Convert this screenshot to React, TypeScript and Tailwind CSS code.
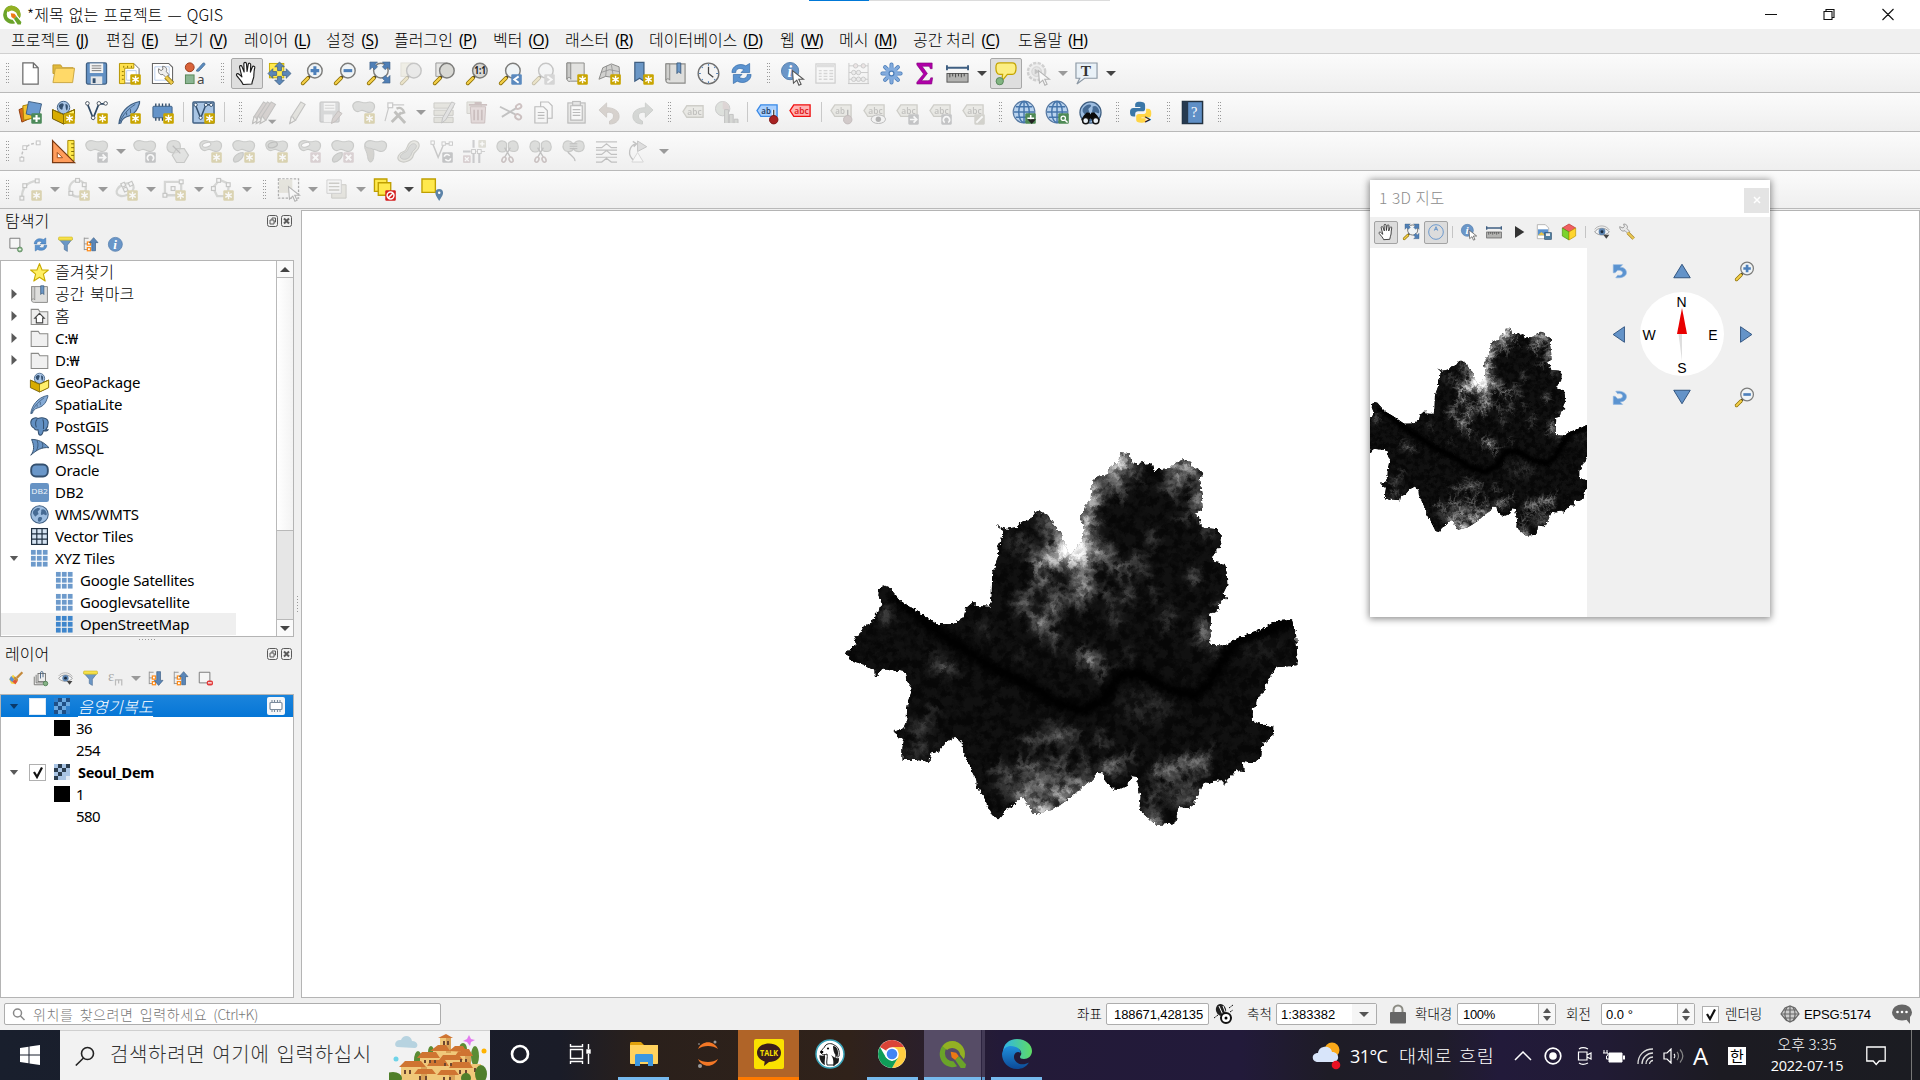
import React from 'react';

const B = '#6b97c6';
const D = '#3f5f82';
const G = '#8a8a88';

const Star = () => (
  <g>
    <rect x="12.800" y="12.800" width="11" height="11" rx="1.200" fill="#c9a500" />
    <path d="M18.300 14.300v8M14.900 16.300l6.800 4M21.700 16.300l-6.800 4" stroke="#fff" strokeWidth="1.500" />
  </g>
);
const Lens = ({ children, dark }: { children?: React.ReactNode; dark?: boolean }) => (
  <g>
    <path d="M9.500 14.500L7 17" stroke="#222" strokeWidth="2.600" />
    <path d="M7.200 16.800L1.800 22.200" stroke="#8a6d00" strokeWidth="4" strokeLinecap="round" />
    <path d="M7.200 16.800L1.800 22.200" stroke="#f4cf4a" strokeWidth="2.400" strokeLinecap="round" />
    <circle cx="14.500" cy="9" r="7.600" fill={dark ? '#d8d8d4' : '#f0f4f6'} stroke="#7d7d7b" strokeWidth="1.500" />
    {children}
  </g>
);
const Blob = () => (
  <path d="M1 6.500C0 2.500 4 0 8 .8c3 .6 5 1.500 7.500.8C20 0 24 2 23.500 6.500S19 13 15.500 11.500 11 8.800 8.500 10.300 2 11 1 6.500z" fill="#b3b8b0" stroke="#858a82" strokeWidth="1.200" />
);
const Sq = ({ c = '#7d8188', children }: { c?: string; children?: React.ReactNode }) => (
  <g>
    <rect x="12.800" y="12.800" width="11" height="11" rx="1.200" fill={c} />
    {children}
  </g>
);
const Tag = ({ t = 'abc', f = '#d9d7c3', s = '#96947c', c = '#77756a' }: { t?: string; f?: string; s?: string; c?: string }) => (
  <g>
    <path d="M1 9l4-6h17v12H5z" fill={f} stroke={s} strokeWidth="1.400" />
    <text x="5.500" y="12.400" fontSize="9.500" fill={c} fontFamily='"Noto Sans"' fontWeight="600" textLength={t.length * 5} lengthAdjust="spacingAndGlyphs">{t}</text>
  </g>
);
const World = ({ r = 11 }: { r?: number }) => (
  <g>
    <circle cx="12" cy="12" r={r} fill="#9dbde0" stroke={D} strokeWidth="1.300" />
    <path d="M4 8c3-4 6-5 8-4s-1 3-2 4 2 3 0 4-3 4-4 2-3-2-2-6zM14 6c3-2 6 0 7 4s-2 3-3 2-3 2-4 0 1-3 0-6zM12 15c3 0 4 1 3 3s-2 4-4 3-1-6 1-6z" fill="#466b94" />
  </g>
);
const GlobeGrid = () => (
  <g>
    <circle cx="11.500" cy="11.500" r="11.300" fill="#b9d3ee" stroke="#5577a0" strokeWidth="1.200" />
    <path d="M1 11.500h21M3 6h17M3 17h17M11.500 .5v22" stroke="#4575ab" strokeWidth="1.500" />
    <ellipse cx="11.500" cy="11.500" rx="5.500" ry="11" fill="none" stroke="#4575ab" strokeWidth="1.500" />
  </g>
);
const HandShape = () => (
  <path d="M8.500 23.500c-1-3-4.500-6.500-6.700-9.300-1-1.600 1-2.800 2.400-1.400l3 2.700L4.800 5.600C4.400 3.700 6.700 3 7.300 4.800l2.200 5.600L9.200 1.800c0-1.900 2.600-1.900 2.800 0l.6 8 1.200-7.400c.3-1.800 2.700-1.400 2.600.4l-.3 7.700 2-5.300c.7-1.600 2.900-.9 2.500.8-.9 3-.8 6.100-1 9-.3 3-1.900 5-2 8z" fill="#fff" stroke="#1c1c1c" strokeWidth="1.200" strokeLinejoin="round" />
);
const Refresh = () => (
  <g fill="#5b93d0" stroke="#2f67a6" strokeWidth=".7">
    <path d="M2 11C2 4 10 .5 16.500 4l4-2.500V11h-9l3-3C10 5.500 6 7 6 11z" />
    <path d="M22 13c0 7-8 10.500-14.500 7l-4 2.500V13h9l-3 3c4.500 2.500 8.500 1 8.500-3z" />
  </g>
);
const Quill = () => (
  <g>
    <path d="M1 23.500C2 14 9 3 22.500 .5c.5 3-1.500 4-1.500 6-3 7-8 9-12 10-3 1-5 3-6 6.500z" fill="#86abd6" stroke={D} strokeWidth="1.200" />
    <path d="M1.500 23C5 14 11 8 18 3.500M9 12v3M13 8.500v4" stroke={D} fill="none" />
  </g>
);
const Box = () => (
  <g>
    <path d="M.5 9L12 14l11.500-5v9.500L12 24 .5 18.500z" fill="#d8ac00" stroke="#6b5500" />
    <path d="M12 14l11.500-5v9.500L12 24z" fill="#fff06b" stroke="#8a7000" />
    <circle cx="12" cy="6.800" r="6.500" fill="#a9c5e6" stroke={D} />
    <path d="M7 5c2-3 4-3 5-2s-1 3-1 5-3 1-4-3zM14 3c3 0 3 3 2 6s-2-3-2-6z" fill="#34506f" />
    <path d="M.5 9L12 14l11.500-5" fill="none" stroke="#8a7000" />
  </g>
);
const Info = () => (
  <g>
    <circle cx="9.500" cy="9.500" r="9" fill="#6a96c8" stroke="#557fae" />
    <text x="6.800" y="15.500" fontSize="17" fontStyle="italic" fontWeight="700" fill="#fff" fontFamily='"Liberation Serif"'>i</text>
  </g>
);
const Cursor = () => <path d="M12 9l11.500 9h-5l2.500 5.200-2.300 1-2.200-5.200-3.500 3z" fill="#fff" stroke="#555" strokeWidth="1.100" />;
const Pencil = ({ x = 0, c = '#c9c8b4' }: { x?: number; c?: string }) => (
  <g transform={`translate(${x} 0)`} stroke="#77756f" strokeWidth="1.100">
    <path d="M4 23.500l1.500-7L15.500 1l4.500 2.500L10 20z" fill={c} />
    <path d="M4 23.500l1.500-7 2 .5.500 1.500 2 1.500z" fill="#efece4" />
  </g>
);
const Eye = () => (
  <g>
    <path d="M1 12C5 5 17 4 23 12 17 18 7 18 1 12z" fill="#f2f4f6" stroke="#888" strokeWidth="1.200" />
    <circle cx="12" cy="11.500" r="5" fill="#5d84b0" />
    <circle cx="12" cy="11.500" r="2.200" fill="#1d2c3d" />
    <path d="M1 8C6 1 18 1 23 9" fill="none" stroke="#aaa" strokeWidth="1.300" />
    <path d="M14 16h9l-4.500 6z" fill="#444" />
  </g>
);
const Funnel = () => (
  <g>
    <path d="M1 3h22l-8 10v10l-5-3v-7z" fill={B} stroke="#4f7197" />
    <rect x="1" y="0" width="22" height="5" rx="1" fill="#f6e14c" stroke="#c9ae00" strokeWidth=".8" />
  </g>
);
const TreeArrow = ({ up }: { up?: boolean }) => (
  <g>
    <path d="M2 1v20M2 2h7M2 11h6M2 20h6" stroke="#888" fill="none" strokeWidth="1.300" />
    <rect x="7" y="8" width="5" height="5" fill="#fff" stroke="#ff8c1a" strokeWidth="2" />
    <rect x="7" y="17" width="5" height="5" fill="#fff" stroke="#ff8c1a" strokeWidth="2" />
    <path d={up ? 'M17 1l7 8h-4v13h-6V9h-4z' : 'M17 23l7-8h-4V1h-6v14h-4z'} fill="#5a86b8" stroke="#35597f" />
  </g>
);
const Tri = ({ d }: { d: string }) => <path d={d} fill="#6493c8" stroke="#2f527d" strokeWidth="1.300" />;
const Grid9 = ({ c = '#6d9acb' }: { c?: string }) => (
  <g fill={c}>
    {[2, 9.500, 17].map((y) => [2, 9.500, 17].map((x) => <rect key={`${x}-${y}`} x={x - .8} y={y - .8} width="6" height="6" />))}
  </g>
);
const Nodes = ({ d, p }: { d: string; p: number[][] }) => (
  <g>
    <path d={d} fill="none" stroke="#a3a8a0" strokeWidth="2.400" />
    <g fill="#f4f4f4" stroke="#7c7f78" strokeWidth="1.200">{p.map(([x, y]) => <rect key={`${x},${y}`} x={x - 2} y={y - 2} width="4" height="4" />)}</g>
  </g>
);
const Split = () => (
  <g>
    <path d="M11 3.500C9 0 3 0 1.500 4S2 12 6 12.500s5-2 5-4zM13 3.500C15 0 21 0 22.500 4S23 12 19 12s-6-2-6-4z" fill="#b3b8b0" stroke="#858a82" strokeWidth="1.200" />
    <path d="M9 8l6 10M15 8L9 18" stroke="#777" strokeWidth="1.500" />
    <ellipse cx="8.300" cy="20.500" rx="1.900" ry="2.800" transform="rotate(25 8.300 20.500)" fill="none" stroke="#a07878" strokeWidth="1.700" />
    <ellipse cx="15.700" cy="20.500" rx="1.900" ry="2.800" transform="rotate(-25 15.700 20.500)" fill="none" stroke="#a07878" strokeWidth="1.700" />
  </g>
);
const XMark = () => <Sq c="#c59aa3"><path d="M15.500 15.500l5.600 5.600M21.100 15.500l-5.600 5.600" stroke="#fff" strokeWidth="2" /></Sq>;
const Part = () => <path d="M2.500 23c-3-3 2-10 9-10 1.500 5-4 10.500-9 10z" fill="#a9ada5" stroke="#858a82" strokeWidth="1.200" />;

const icons: Record<string, React.ReactNode> = {
  new: <path d="M4 1h11l5 5v17H4zM15 1v5h5" fill="#fff" stroke="#6b6b6b" strokeWidth="1.300" />,
  open: <g><path d="M1 3h8l2 3h11v6H1z" fill="#e0b93a" stroke="#c19a2a" /><path d="M3.500 6.500h20l-2 15H1z" fill="#ffd968" stroke="#c9a540" /></g>,
  save: <g><rect x="1.500" y="1" width="21" height="22" rx="1.500" fill="#6290c3" stroke={D} strokeWidth="1.300" /><rect x="5" y="1.500" width="14" height="10" fill="#f3f3f3" /><path d="M7 4h10M7 6.500h10M7 9h10" stroke="#777" /><rect x="6" y="15" width="12" height="8" fill="#e4e6e8" /><rect x="8" y="17" width="3" height="5" fill="#33506f" /></g>,
  layout: <g><path d="M2 2h15l5 5v15H2z" fill="#fff" stroke="#666" /><path d="M9 9h10v10H9z" fill="none" stroke="#bcd0ee" /><path d="M1.500 1.500h15v5H7v16H1.500z" fill="#ffe14d" stroke="#b89700" /><path d="M6 4v2M10 4v2M14 4v2M4 10h2M4 14h2M4 18h2" stroke="#8c7300" /><Star /></g>,
  manager: <g><path d="M1.500 1.500h17l4 4v17h-21z" fill="#fff" stroke="#666" strokeWidth="1.100" /><path d="M4 5h15v14H4z" fill="#fff" stroke="#bcd0ee" /><path d="M8 7l2.500 2 2-1.500L12 4.500c4 0 5 3 4 5.500l3 3.500-3 3-3.500-3.500C9 14 7 11 8 7z" fill="#eee" stroke="#777" /><path d="M15.500 15.500l7 7" stroke="#8a6d00" strokeWidth="4.600" /><path d="M15.500 15.500l6.800 6.800" stroke="#ecc94b" strokeWidth="3" /></g>,
  style: <g><circle cx="6" cy="5.500" r="4.600" fill="#d9633a" stroke="#9b3d1d" /><path d="M13 9.500c0-2 1.500-2 2.500-3.500L20 1c2 0 2.500 1 1.500 2.200L17 8c-1 1.500-2 2-4 1.500z" fill="#5c8cc0" stroke="#3e668f" strokeWidth=".8" /><rect x="1.500" y="13.500" width="9" height="9" fill="#8bb593" stroke="#588758" /><text x="13.500" y="22.500" fontSize="14" fill="#444" fontFamily='"Noto Sans"'>a</text></g>,
  hand: <HandShape />,
  pan: <g><rect x="1.500" y="1.500" width="15" height="15" fill="#ffe94d" stroke="#c9ad00" /><path d="M12 0l5 5h-3v4h-4V5H7zM12 24l5-5h-3v-4h-4v4H7zM0 12l5-5v3h4v4H5v3zM24 12l-5-5v3h-4v4h4v3z" fill="#5b87b9" stroke={D} strokeWidth=".8" /></g>,
  zin: <Lens><path d="M14.500 4.500v9M10 9h9" stroke="#4d80bb" strokeWidth="3.200" /></Lens>,
  zout: <Lens><path d="M10 9h9" stroke="#4d80bb" strokeWidth="3.200" /></Lens>,
  zfull: <g><Lens /><path d="M3 0h8L8.500 2.500 11 5 8 8 5.500 5.500 3 8zM24 0h-8l2.500 2.500L16 5l3 3 2.500-2.500L24 8zM24 22h-8l2.500-2.500L16 17l3-3 2.500 2.500L24 14z" fill="#4f7fb6" stroke={D} strokeWidth=".6" /></g>,
  zsel: <g><rect x="1" y="1" width="12" height="14" fill="#e8e2b8" stroke="#c9c19a" /><Lens dark /></g>,
  zlay: <g><path d="M3 1h12v14H3z" fill="#e6e6e4" stroke="#999" /><Lens dark /></g>,
  z11: <Lens dark><text x="8.500" y="13" fontSize="10.500" fontWeight="700" fill="#222" fontFamily='"Open Sans"' textLength="12.500" lengthAdjust="spacingAndGlyphs">1:1</text></Lens>,
  zlast: <g><Lens /><Sq c="#5b8abf"><path d="M20.500 15l-4.500 3.300 4.500 3.300" fill="none" stroke="#fff" strokeWidth="2" /></Sq></g>,
  znext: <g><Lens /><Sq c="#aaa"><path d="M16 15l4.500 3.300L16 21.600" fill="none" stroke="#fff" strokeWidth="2" /></Sq></g>,
  newmap: <g><path d="M2 1h18v19H6c-3 1-4-1-4-3z" fill="#e2e2e0" stroke={G} /><path d="M2 18c0-2 4-3 4 0V1H2z" fill="#c9c9c7" stroke={G} /><Star /></g>,
  mesh: <g><path d="M1 18L5 6l9-4 8 3 1 14-8-3-7-1z" fill="#d0d0ce" stroke={G} /><path d="M3 11l9-3 10 2M9 4L8 15M14 3l2 12" stroke="#8f8f8f" fill="none" strokeWidth=".8" /><Star /></g>,
  bmnew: <g><path d="M4 .5h9.500V20L9 17l-5 3z" fill={B} stroke={D} strokeWidth="1.300" /><Star /></g>,
  bm: <g><path d="M2 2h20v20H6c-3 0-4-1-4-3z" fill="#dededc" stroke={G} strokeWidth="1.200" /><path d="M2 19c0-2 4-2 4 0V2H2z" fill="#cfcfcd" stroke={G} /><path d="M13.500 1h4v11l-2-2-2 2z" fill={B} stroke={D} /></g>,
  clock: <g><circle cx="12" cy="12" r="10.800" fill="#f4f4f4" stroke="#6f6f6f" strokeWidth="1.400" /><path d="M12 5v7l5 4" fill="none" stroke="#444" strokeWidth="1.300" /><path d="M12 2v2M12 20v2M2 12h2M20 12h2M5 5l1 1M19 5l-1 1M5 19l1-1M19 19l-1-1" stroke="#4f7fb6" strokeWidth="1.200" /></g>,
  refresh: <Refresh />,
  ident: <g><Info /><Cursor /></g>,
  table: <g><rect x="2" y="2" width="20" height="20" fill="#fafafa" stroke="#999" strokeWidth="1.300" /><path d="M3 4h18" stroke="#bbb" strokeWidth="3" /><path d="M5 9h3M10 9h4M16 9h4M5 12h3M10 12h4M16 12h4M5 15h3M10 15h4M16 15h4M5 18h3M10 18h4M16 18h4" stroke="#aaa" strokeWidth="1.500" /></g>,
  abacus: <g fill="#ddd" stroke="#888"><path d="M2 1v21M22 1v21M2 4h20M2 11h20M2 18h20M1 22.500h22" fill="none" /><circle cx="9" cy="4" r="2.300" fill="#e8c4c4" /><circle cx="17" cy="4" r="2.300" fill="#e8c4c4" /><circle cx="7" cy="11" r="2.300" /><circle cx="12" cy="11" r="2.300" /><circle cx="17" cy="18" r="2.300" /><circle cx="12" cy="18" r="2.300" /><circle cx="7" cy="18" r="2.300" /></g>,
  gear: <g><g stroke="#4c7db8" strokeWidth="4.200" strokeLinecap="round"><path d="M12 2.500v19M2.500 12h19M5.300 5.300l13.400 13.400M18.700 5.300L5.300 18.700" /></g><g stroke="#82abdd" strokeWidth="2.600" strokeLinecap="round"><path d="M12 2.500v19M2.500 12h19M5.300 5.300l13.400 13.400M18.700 5.300L5.300 18.700" /></g><circle cx="12" cy="12" r="6.600" fill="#82abdd" /><circle cx="12" cy="12" r="2.500" fill="#fafafa" stroke="#4c7db8" strokeWidth="1.300" /></g>,
  sigma: <path d="M4 1h16v6h-2c-.5-2-1-2.500-3-2.500H9.500L15 12l-6 7.500h6.500c2 0 2.500-1 3-3h2L19.500 23H4v-2l7-8.500L4 3z" fill="#b000a8" stroke="#7b0076" strokeWidth=".6" />,
  measure: <g><path d="M1 6h22M1 3.500v5M23 3.500v5" stroke={D} strokeWidth="2" /><rect x="1" y="12" width="22" height="9" fill="#b3b3b1" stroke="#555" /><path d="M4 12v4M7 12v3M10 12v4M13 12v3M16 12v4M19 12v3" stroke="#444" /></g>,
  tips: <g><path d="M6 1h13c3 0 4 2 4 5s-1 7-4 7h-5l-6 7 1-7H6c-3 0-4-3-4-7s1-5 4-5z" fill="#fcee82" stroke="#c4a400" strokeWidth="1.300" /><circle cx="6" cy="20" r="3.800" fill="#82b582" stroke="#57875a" /></g>,
  run: <g><circle cx="10" cy="10" r="9" fill="#e2e2e2" stroke="#999" strokeWidth="2.500" strokeDasharray="3.500 1.300" /><circle cx="10" cy="10" r="5" fill="#ccc" stroke="#999" /><path d="M8 7l5 3-5 3z" fill="#777" /><Cursor /></g>,
  textann: <g><path d="M1 1h22v16H10l-8 6 3-6H1z" fill="#e9f1f7" stroke="#8c98a4" strokeWidth="1.200" /><text x="6" y="14.500" fontSize="16" fontWeight="700" fill="#333" fontFamily='"Liberation Serif"'>T</text></g>,

  layers: <g><path d="M0 9l7-3 5 12-9 4z" fill="#d96b1c" stroke="#8f3c0a" /><path d="M4 5l9-2 1 15-9 2z" fill="#f4c430" stroke="#a97f00" /><path d="M10 .5l13.500 2.500-3 13.500-13-3z" fill="#6b9ad0" stroke={D} /><Sq c="#4c8a5a"><path d="M18.300 14.600v7.400M14.600 18.300h7.400" stroke="#fff" strokeWidth="2.200" /></Sq></g>,
  gpkg: <g><Box /><Star /></g>,
  vnew: <g><path d="M2.500 3l6 15 6-15h7" fill="none" stroke="#2f4a66" strokeWidth="1.800" /><g fill="#fff" stroke="#49545f"><circle cx="2.500" cy="2.500" r="1.900" /><circle cx="14.500" cy="2.500" r="1.900" /><circle cx="21.500" cy="2.500" r="1.900" /><circle cx="8.500" cy="17.500" r="1.900" /></g><Star /></g>,
  quillnew: <g><Quill /><Star /></g>,
  chip: <g><path d="M5 2.500v18M8.500 2.500v18M12 2.500v18M15.500 2.500v18M19 2.500v18" stroke="#2c4866" strokeWidth="1.400" /><rect x="2" y="5.500" width="20" height="12" rx="1" fill="#6493c8" stroke={D} /><Star /></g>,
  virt: <g><rect x="1" y="1" width="22" height="22" rx="1" fill="#a9c5e4" stroke={D} strokeWidth="1.500" /><path d="M3.500 4l5.500 14L14.500 4h6" fill="none" stroke="#34506f" strokeWidth="1.600" /><g fill="#fff" stroke="#34506f"><circle cx="3.800" cy="4" r="1.700" /><circle cx="14.500" cy="4" r="1.700" /><circle cx="20" cy="4" r="1.700" /><circle cx="9" cy="17.500" r="1.700" /></g><Star /></g>,
  pencils: <g><Pencil x={-4.500} c="#b09a92" /><Pencil x={-.5} c="#b09a92" /><Pencil x={3.500} c="#b09a92" /><path d="M15.500 19.500h9l-4.500 4.500z" fill="#222" /></g>,
  pencil: <Pencil />,
  savee: <g><rect x="1" y="1" width="20" height="21" rx="1" fill="#a9adb1" stroke="#777" /><rect x="5" y="2" width="12" height="8" fill="#f3f3f3" /><path d="M6 4.500h10M6 7.500h10" stroke="#999" /><rect x="5" y="14" width="9" height="8" fill="#eee" /><path d="M13 23.500l1-5 6-8 4 2.500-6.500 8z" fill="#b8a199" stroke="#857068" /></g>,
  addblob: <g><Blob /><Star /></g>,
  vertex: <g><path d="M6 4h14M4 6L0 21" stroke="#888" fill="none" strokeWidth="1.200" /><rect x="3" y="2" width="5" height="5" fill="#fff" stroke="#888" strokeWidth="1.300" /><path d="M7 22L17 12M10 11l11 12" stroke="#77756a" strokeWidth="3" /><path d="M12 8c4-2 7 0 8 4l-3 1" stroke="#77756a" strokeWidth="2.500" fill="none" /></g>,
  multi: <g><path d="M1 2h20v5.500H1zM1 9.500h20V15H1zM1 17h20v5.500H1z" fill="#cdcbb0" stroke="#8f8c78" /><path d="M9 23l1-5.500L19.500 1l3.500 1.500-9.500 17z" fill="#c7c7c7" stroke="#777" /></g>,
  trash: <g><path d="M1 1h15v12H1z" fill="#d6d2bd" stroke="#a19d85" /><path d="M3 4h19M9 2h7" stroke="#a56a6a" strokeWidth="2" fill="none" /><path d="M4.500 6h16l-1 17H5.500z" fill="#ddb0b0" stroke="#a56a6a" /><path d="M8.500 9v11M12.500 9v11M16.500 9v11" stroke="#a56a6a" strokeWidth="1.800" /></g>,
  cut: <g fill="none" stroke="#777" strokeWidth="2"><path d="M1 6l16 8M3 16.500l15-9" /><ellipse cx="20" cy="16.500" rx="3.300" ry="2.500" transform="rotate(30 20 16.500)" stroke="#a96f6f" /><ellipse cx="20.500" cy="5.800" rx="3" ry="2.200" transform="rotate(-30 20.500 5.800)" stroke="#a96f6f" /></g>,
  copy: <g fill="#fafafa" stroke="#666" strokeWidth="1.200"><path d="M9 1h8l4 4v13H9z" /><path d="M3 6h9l4 4v13H3z" /><path d="M6 12h7M6 15h7M6 18h7" /></g>,
  paste: <g stroke="#666" strokeWidth="1.200"><rect x="3" y="2" width="18" height="21" fill="#d5d5d0" /><path d="M6 5h12v15H6z" fill="#fff" /><rect x="8" y="0.500" width="8" height="4" fill="#ccc" /><path d="M8 9h8M8 12h8M8 15h8" /></g>,
  undo: <path d="M9 1L1 8.500 9 16v-5c5-1 8 1 7 5-.5 2-2 3-4 4v3c6 0 10-3 10-8 0-6-6-9-13-9z" transform="translate(0 1)" fill="#b59d89" stroke="#a08b7a" />,
  redo: <path d="M15 1l8 7.500L15 16v-5c-5-1-8 1-7 5 .5 2 2 3 4 4v3c-6 0-10-3-10-8 0-6 6-9 13-9z" transform="translate(0 1)" fill="#a3aca3" stroke="#8c958c" />,
  label: <g transform="translate(0 2)"><Tag /></g>,
  diag: <g><circle cx="8" cy="8" r="7.500" fill="#b7c4b0" stroke="#888" /><path d="M8 8V.5a7.500 7.500 0 0 1 6 11z" fill="#c79f9f" /><path d="M10 23V9h4v14M15 23v-9h4v9M20 23v-4h4v4" fill="#a9b0a4" stroke="#777" /></g>,
  labelpin: <g transform="translate(0 1)"><Tag t="ab" f="#a9d0ff" s="#3b8ae6" c="#243f66" /><path d="M18.500 8v7" stroke="#fff" strokeWidth="3" /><path d="M18.500 8v8" stroke="#444" strokeWidth="1.400" /><circle cx="18.500" cy="18.500" r="4.400" fill="#a82222" stroke="#7c1212" /></g>,
  labelred: <g transform="translate(0 1)"><Tag f="#ffb3b3" s="#f01010" c="#e02020" /></g>,
  lpin: <g transform="translate(0 1)"><Tag t="ab" /><path d="M18.500 8v8" stroke="#555" strokeWidth="1.400" /><circle cx="18.500" cy="18.500" r="4.400" fill="#b08a8a" stroke="#8a6666" /></g>,
  leye: <g transform="translate(0 1)"><Tag /><ellipse cx="16" cy="18" rx="7.500" ry="4.500" fill="#f2f2f2" stroke="#666" /><circle cx="16" cy="18" r="2.800" fill="#555" /></g>,
  lmove: <g transform="translate(0 1)"><Tag /><Sq><path d="M14.500 18.300h6.500M18.300 15l3.300 3.300-3.300 3.300" stroke="#fff" strokeWidth="1.800" fill="none" /></Sq></g>,
  lrot: <g transform="translate(0 1)"><Tag /><Sq><path d="M16.500 21.500a3.300 3.300 0 1 1 3.500 0" stroke="#fff" strokeWidth="1.800" fill="none" /></Sq></g>,
  ledit: <g transform="translate(0 1)"><Tag /><Sq c="#a6a48a"><path d="M15 21.500l6.500-6.500" stroke="#fff" strokeWidth="2" /></Sq></g>,
  webadd: <g><GlobeGrid /><Sq c="#4f8a55"><path d="M18.500 14.500v7M15 18h7" stroke="#fff" strokeWidth="1.600" /></Sq><path d="M15 19h9l-4.500 5z" fill="#222" /></g>,
  webfind: <g><GlobeGrid /><Sq c="#4f8a55"><circle cx="18" cy="18" r="2.300" stroke="#fff" strokeWidth="1.300" fill="none" /><path d="M20 20l2.500 2.500" stroke="#fff" strokeWidth="1.500" /></Sq></g>,
  websearch: <g><World /><path d="M5 15l3-3h3l1 2 1-2h3l3 3 3 5h-8l-2-2-2 2H2z" fill="#0a0a0a" /><circle cx="7" cy="20.500" r="3.200" fill="#e9f0f6" stroke="#111" strokeWidth="1.500" /><circle cx="17.500" cy="20.500" r="3.200" fill="#e9f0f6" stroke="#111" strokeWidth="1.500" /></g>,
  python: <g><path d="M11 1c-4 0-5 1.500-5 4v2h6v1H4c-3 0-4 2-4 5s1 5 4 5h2v-3c0-2 1.500-3 3.500-3h5c2 0 3-1 3-3V5c0-3-2-4-6.500-4z" transform="scale(.9)" fill="#3b77a8" /><path d="M19 8h-2v3c0 2-1.500 3-3.500 3h-5c-2 0-3 1-3 3v4c0 2 2 3 6 3s5-1 5-4v-1h-5v-1h8c3 0 3.500-2 3.500-5s-1-5-4-5z" transform="translate(1.500 1) scale(.9)" fill="#ffd545" /><text x="15" y="24" fontSize="12" fontWeight="700" fill="#222" fontFamily='"Noto Sans"'>&gt;</text></g>,
  help: <g><rect x="1.500" y="0.500" width="21" height="23" fill="#5f8fc6" stroke="#22313f" strokeWidth="1.500" /><rect x="1.500" y="0.500" width="6" height="23" fill="#263a50" /><text x="10.500" y="17" fontSize="15" fill="#fff" fontFamily='"Liberation Serif"'>?</text></g>,

  arcdash: <g stroke="#777" fill="none"><path d="M3 20C2 12 6 4 20 3" strokeDasharray="3 2" strokeWidth="1.500" /><g fill="#fff"><rect x="18" y="1" width="4" height="4" /><rect x="1" y="18" width="4" height="4" /><rect x="4" y="6" width="4" height="4" /></g></g>,
  ruler: <g><path d="M16.500 .5H23V22h-6.500z" fill="#ffe94d" stroke="#a38700" /><path d="M20 4h3M20 8h3M20 12h3M20 16h3" stroke="#7d6800" /><path d="M.6 .6l23 23H.6z" fill="#ff9d5c" stroke="#7a3a12" strokeWidth="1.300" /><path d="M5.500 13l5.500 5.500H5.500z" fill="#fff" stroke="#9c4a17" /></g>,
  bmove: <g><Blob /><Sq><path d="M14.500 18.300h6.500M18.300 15l3.300 3.300-3.300 3.300" stroke="#fff" strokeWidth="1.800" fill="none" /></Sq></g>,
  brot: <g><Blob /><Sq><path d="M16.500 21.500a3.300 3.300 0 1 1 3.500 0" stroke="#fff" strokeWidth="1.800" fill="none" /></Sq></g>,
  bsimp: <g fill="#b3b8b0" stroke="#858a82" strokeWidth="1.200"><path d="M8 .5c5 0 7 2 7 6s-1 7-6 7-8-2-8-6 2-7 7-7z" /><path d="M11 9h8l4.500 7L19 23.500h-8L6.500 16z" fillOpacity=".7" /><path d="M7 6l8 8" stroke="#666" /></g>,
  bring: <g><Blob /><ellipse cx="8" cy="5" rx="4.500" ry="2.300" transform="rotate(-15 8 5)" fill="#fff" stroke="#82857f" /><Star /></g>,
  bpart: <g><Blob /><Part /><Star /></g>,
  bfill: <g><Blob /><ellipse cx="8" cy="5.200" rx="5" ry="2.800" transform="rotate(-15 8 5)" fill="#9fa49c" stroke="#6b6f68" strokeWidth="1.300" /><Star /></g>,
  bringx: <g><Blob /><ellipse cx="8" cy="5" rx="4.500" ry="2.300" transform="rotate(-15 8 5)" fill="#fff" stroke="#82857f" /><XMark /></g>,
  bpartx: <g><Blob /><Part /><XMark /></g>,
  breshape: <g><Blob /><path d="M1 6c2 4 8 1 9 5s0 12-3 12-3-5-4-9-3-5-2-8z" fill="#a9a596" stroke="#858a82" /></g>,
  boff: <g><path d="M14 2c5-3 10 0 9 5s-5 4-6 9-9 9-14 6 0-9 4-10 3-7 7-10z" fill="#d0cfb8" stroke="#8f907c" strokeWidth="1.200" /><path d="M15 4.500c3-1.500 6 0 5 3s-4 3-5 7-6 7-10 5 1-6 4-7 2-5 6-8z" fill="#adb2aa" stroke="#858a82" /></g>,
  vrev: <g><path d="M2.500 3l6 15 6-14h7" fill="none" stroke="#888" strokeWidth="1.500" /><g fill="#fff" stroke="#888"><rect x="1" y="1" width="3.500" height="3.500" /><rect x="12.500" y="2" width="3.500" height="3.500" /><rect x="20" y="2" width="3.500" height="3.500" /></g><Sq><path d="M15 17.500c0-3 4.500-3 5.500-1M21.500 19c0 3.500-4.500 3-5.500 1" stroke="#fff" strokeWidth="1.600" fill="none" /></Sq></g>,
  trim: <g><path d="M11 0v8M11 14v10M17 12v12" stroke="#8d9099" strokeWidth="2.200" /><path d="M0 12h8" stroke="#8d9099" strokeWidth="2.200" /><path d="M14 12h9" stroke="#999" /><g fill="#fff" stroke="#888"><rect x="9" y="10" width="4" height="4" /><rect x="15" y="10" width="4" height="4" /></g><rect x="16" y="0" width="8" height="8" rx="1" fill="#bdb994" /><path d="M20 1.500v5M17.500 4h5" stroke="#fff" strokeWidth="1.400" /><rect x="0" y="16" width="8" height="8" rx="1" fill="#c59aa3" /><path d="M2 18l4 4M6 18l-4 4" stroke="#fff" strokeWidth="1.400" /></g>,
  split: <Split />,
  merge: <g><path d="M11 3.500C9 0 3 0 1.500 4S2 11.500 6 12s5-1 6-3c1 2 3 3.500 7 3s5-5 3.500-8.500S15 0 13 3.500z" fill="#b3b8b0" stroke="#858a82" strokeWidth="1.200" /><path d="M8 4h8M8 6.500h8M8 9h8" stroke="#666" /><path d="M6 12c1 3 8 6 7.500 10" fill="none" stroke="#777" strokeWidth="1.400" /></g>,
  mergea: <g stroke="#777" fill="none" strokeWidth="1.300"><path d="M1 2h22M1 8h6l5-4 5 4h6M1 10.500h22M1 15h6l5-4 5 4h6M1 18h22M1 23h6l5-4 5 4h6" /></g>,
  rotpt: <g><path d="M6 21C-1 16 1 6 8 4M5 1.500L9 4 6 7" fill="none" stroke="#777" strokeWidth="1.400" /><path d="M10 1l9.500 6L10 12z" fill="#bbb" stroke="#777" /><path d="M10 13l6 10H4z" fill="#fff" stroke="#aaa" /></g>,

  arc: <g><Nodes d="M3 21C3 10 8 4 19 3" p={[[19, 3], [6, 8], [3, 21]]} /><Star /></g>,
  circ: <g><Nodes d="M11 2.500a8.500 8.500 0 1 0 .1 0z" p={[[11, 2.500], [18, 7], [4, 16]]} /><Star /></g>,
  ell: <g><g transform="rotate(-25 11 12)"><Nodes d="M1 12a9 5.500 0 1 0 19 0a9 5.500 0 1 0-19 0" p={[[11, 12], [18.500, 9], [11, 6.500]]} /></g><Star /></g>,
  rectn: <g><Nodes d="M2 4h17v14H2z" p={[[19, 4], [10.500, 11], [2, 18]]} /><Star /></g>,
  poly: <g><Nodes d="M9 2l9.500 4-1 13h-11L2 10z" p={[[8, 2.500], [18, 7], [2.500, 11]]} /><Star /></g>,
  selrect: <g><rect x="1.500" y="1" width="21" height="20" fill="none" stroke="#444" strokeDasharray="2.500 1.500" strokeWidth="1.300" /><rect x="2" y="1.500" width="14" height="14" fill="#cfc9a6" /><Cursor /></g>,
  selform: <g stroke="#8f8c78" fill="#cfccb2"><path d="M7 7h15v14H7z" /><path d="M2 2h15v14H2z" fill="#f3f3f3" stroke="#999" /><path d="M4 5.500h11M4 9h11M4 12.500h11" strokeWidth="1.500" /></g>,
  desel: <g><path d="M1.500 1h13v13h-13z" fill="#ffe94d" stroke="#bf9f00" strokeWidth="1.400" /><path d="M5.500 5h13v13h-13z" fill="#ffe94d" stroke="#bf9f00" strokeWidth="1.400" /><Sq c="#d42020"><circle cx="18.300" cy="18.300" r="3.600" fill="none" stroke="#fff" strokeWidth="1.500" /><path d="M21 15.600l-5.400 5.400" stroke="#fff" strokeWidth="1.500" /></Sq></g>,
  selloc: <g><path d="M1 1h14v14H1z" fill="#ffe94d" stroke="#bf9f00" strokeWidth="1.400" /><path d="M19 24c-3-5-4-6-4-8.500a4 4 0 0 1 8 0c0 2.500-1 3.500-4 8.500z" fill="#5c83a8" /><circle cx="19" cy="15.500" r="1.300" fill="#fff" /></g>,

  addlay: <g><path d="M3 2h16v16H3z" fill="#f6f6f6" stroke="#777" strokeWidth="1.500" /><circle cx="19" cy="20" r="4" fill="#86b386" stroke="#4f7d52" /><path d="M19 18v4M17 20h4" stroke="#fff" strokeWidth="1.200" /></g>,
  remlay: <g><path d="M2 2h17v17H2z" fill="#f6f6f6" stroke="#777" strokeWidth="1.500" /><rect x="14" y="15" width="10" height="8" rx="3" fill="#e23b3b" /><path d="M16 19h6" stroke="#fff" strokeWidth="2" /></g>,
  funnel: <Funnel />,
  tup: <TreeArrow up />,
  tdown: <TreeArrow />,
  info: <g transform="scale(1.240)"><Info /></g>,
  brush: <g><path d="M2 13l6-7 8 8-4 7-7-1z" fill="#f5d33c" /><path d="M2 13l3-5 5 5-3 5z" fill="#5c8fd0" /><path d="M7 17l4-4 5 2-4 6z" fill="#e0533c" /><path d="M10 10l5 5M14 11l9-9" stroke="#c48a3c" strokeWidth="3.500" /></g>,
  group: <g fill="#eee" stroke="#6e6e6c" strokeWidth="1.400"><path d="M2 9v13h14M5 6v13h13" fill="none" /><rect x="8" y="4" width="12" height="13" /><path d="M12 12V3c0-3 4-3 4 0v7" fill="none" stroke={D} /><circle cx="20" cy="20" r="3.600" fill="#86b386" stroke="#4f7d52" /></g>,
  eye: <Eye />,
  expr: <g><text x="0" y="16" fontSize="24" fill="#aaa" fontFamily='"Liberation Serif"'>ε</text><path d="M12 23v-9h10v9M17 14v6" stroke="#bbb" strokeWidth="2" fill="none" /></g>,
  starf: <path d="M12 .8l3.200 8h8l-6.300 5.300 2.300 8.700-7.200-4.800-7.200 4.800 2.300-8.700L.8 8.800h8z" fill="#ffef63" stroke="#c9ab00" strokeWidth="1.400" strokeLinejoin="round" />,
  home: <g><path d="M1.500 3h9l2 3h10v16h-21z" fill="#ededed" stroke="#8a8a88" strokeWidth="1.300" /><path d="M6 14l6-6 6 6h-2v6h-8v-6z" fill="#fff" stroke="#444" strokeWidth="1.400" /></g>,
  folder: <path d="M1.500 3h9l2 3h10v16h-21z" fill="#f0f0f0" stroke="#8a8a88" strokeWidth="1.300" />,
  box: <Box />,
  quill: <Quill />,
  elephant: <g fill="#6290c3" stroke="#34506f" strokeWidth="1.300"><path d="M1 7c0-6 7-7 9-5 5-2 13-1 13 5 0 4-2 8-3 9h3c-1 2-4 2-6 1-1 3-1 6-4 6s-2-4-3-7c-2 1-4 0-5-2-2-1-4-4-4-7z" /><path d="M9 3c-3 3-2 7-1 10M16 3c2 3 1 8 1 12" fill="none" /></g>,
  mssql: <g><path d="M2 .5c8 0 15 3 22 10.500C15 10 8 14 1 20.500 6 14 5 8 2 .5z" fill="#6793c4" stroke="#34506f" strokeWidth="1.200" /><path d="M9 2c2 5 1 9-1 13M15 4c2 3 1 6 0 8" fill="none" stroke="#34506f" /></g>,
  oracle: <rect x="1.500" y="4.500" width="21" height="15" rx="6" fill="#6a97c9" stroke="#34506f" strokeWidth="2.400" />,
  db2: <g><rect x="0" y="0" width="24" height="24" rx="3" fill="#6793c4" /><text x="1.500" y="14.500" fontSize="9" fill="#eef4fa" fontFamily='"Noto Sans"' textLength="21" lengthAdjust="spacingAndGlyphs">DB2</text></g>,
  world: <World />,
  vt: <g><rect x="2" y="2" width="20" height="20" fill="#d5e3f2" stroke="#1f2f40" strokeWidth="1.500" /><path d="M2 8.600h20M2 15.200h20M8.600 2v20M15.200 2v20" stroke="#1f2f40" strokeWidth="1.500" /></g>,
  xyz: <Grid9 />,
  xyzd: <Grid9 c="#3f86cc" />,
  compass: <g fill="none" stroke="#5b8fca" strokeWidth="1.300"><circle cx="12" cy="12" r="11" /><path d="M9.500 10L12 4l2.500 6M10 8h4" /></g>,
  play: <path d="M6 3l14 9-14 9z" fill="#333" />,
  saveimg: <g><path d="M2 1h12l5 5v16H2z" fill="#fff" stroke="#999" /><rect x="3" y="8" width="15" height="9" fill="#5b93d0" /><path d="M3 17l5-5 6 5z" fill="#e5c34d" /><rect x="13" y="13" width="10" height="10" fill="#4f7f9f" stroke="#2f4f6f" /><rect x="15" y="14" width="6" height="4" fill="#eee" /></g>,
  cube: <g><path d="M12 0l10 6-10 6L2 6z" fill="#f06060" stroke="#b83030" /><path d="M2 6l10 6v12L2 18z" fill="#7bd32e" stroke="#4c9010" /><path d="M22 6l-10 6v12l10-6z" fill="#ffd52e" stroke="#b89300" /></g>,
  wrench: <g><path d="M1 4l5 2 2-2-1-4c4 0 7 3 5 7l4 4-3 3-4-4C5 12 1 9 1 4z" fill="#e8e8e8" stroke="#777" /><path d="M13 13l9 9" stroke="#a38127" strokeWidth="5" /><path d="M13 13l9 9" stroke="#eccb55" strokeWidth="3" /></g>,
  rotl: <path d="M2 1h15l-4 4c7 0 11 5 10 10s-8 8-17 7l3-4c5 1 8-1 8-4s-4-4-8-4l-4 4H2z" fill="#5b93d0" stroke="#8fb6e0" />,
  rotr: <path d="M2 23h15l-4-4c7 0 11-5 10-10S15 1 6 2l3 4c5-1 8 1 8 4s-4 4-8 4l-4-4H2z" fill="#5b93d0" stroke="#8fb6e0" />,
  triu: <Tri d="M12 3l11 18H1z" />,
  trid: <Tri d="M12 21l11-18H1z" />,
  tril: <Tri d="M3 12L19 1v22z" />,
  trir: <Tri d="M21 12L5 1v22z" />,
};

const Ic = ({ n, className = 'size-6' }: { n: string; className?: string }) => (
  <svg viewBox="0 0 24 24" className={`shrink-0 overflow-visible ${className}`}>{icons[n]}</svg>
);

/* toolbar entries: "|" grip, "/" separator, "v" / "v-" menu arrow, "name-" disabled, "name*" pressed */
const Tool = ({ n }: { n: string }) => {
  if (n === '||' || n === '|') {
    return (
      <div className={`flex h-full shrink-0 items-center justify-end pr-[5px] ${n === '||' ? 'w-5' : 'w-[18px]'}`}>
        <Grip />
      </div>
    );
  }
  if (n === '/') return <div className="flex w-2 shrink-0 justify-center"><div className="h-5 w-px bg-[#c9c9c9]" /></div>;
  if (n === 'v' || n === 'v-') {
    return (
      <div className="flex w-[15px] shrink-0 justify-center">
        <div className={`h-0 w-0 border-x-[5px] border-t-[5px] border-x-transparent ${n === 'v' ? 'border-t-[#444]' : 'border-t-[#9a9a9a]'}`} />
      </div>
    );
  }
  const dis = n.endsWith('-');
  const on = n.endsWith('*');
  return (
    <div className="flex w-[33px] shrink-0 items-center justify-center">
      <div className={`flex h-[31px] w-[32px] items-center justify-center ${on ? 'rounded-[2px] border border-[#a8a8a8] bg-[#dedede]' : ''} ${dis ? 'opacity-40 saturate-50' : ''}`}>
        <Ic n={n.replace(/[-*]$/, '')} className="size-[23px]" />
      </div>
    </div>
  );
};

const Grip = () => (
  <div className="grid h-[20px] w-[4px] grid-cols-2 content-between">
    {Array.from({ length: 14 }, (_, i) => <span key={i} className="size-px bg-[#999]" />)}
  </div>
);

const Bar = ({ items, h = 'h-[39px]' }: { items: string; h?: string }) => (
  <div className={`flex items-center border-b border-[#b9b9b9] bg-gradient-to-b from-[#fbfbfb] to-[#efefef] ${h}`}>
    <div className="flex w-[14px] shrink-0 justify-end pr-1"><Grip /></div>
    {items.split(' ').map((n, i) => <Tool key={i} n={n} />)}
  </div>
);

const menus: [string, string, string][] = [
  ['프로젝트', 'J', 'w-[95px]'], ['편집', 'E', 'w-[68px]'], ['보기', 'V', 'w-[70px]'], ['레이어', 'L', 'w-[82px]'],
  ['설정', 'S', 'w-[68px]'], ['플러그인', 'P', 'w-[99px]'], ['벡터', 'O', 'w-[72px]'], ['래스터', 'R', 'w-[84px]'],
  ['데이터베이스', 'D', 'w-[131px]'], ['웹', 'W', 'w-[59px]'], ['메시', 'M', 'w-[74px]'], ['공간 처리', 'C', 'w-[105px]'], ['도움말', 'H', 'w-[80px]'],
];

const tree: { a?: string; i: string; t: string; l?: number; k?: boolean }[] = [
  { i: 'starf', t: '즐겨찾기', k: true },
  { a: 'r', i: 'bm', t: '공간 북마크', k: true },
  { a: 'r', i: 'home', t: '홈', k: true },
  { a: 'r', i: 'folder', t: 'C:₩' },
  { a: 'r', i: 'folder', t: 'D:₩' },
  { i: 'box', t: 'GeoPackage' },
  { i: 'quill', t: 'SpatiaLite' },
  { i: 'elephant', t: 'PostGIS' },
  { i: 'mssql', t: 'MSSQL' },
  { i: 'oracle', t: 'Oracle' },
  { i: 'db2', t: 'DB2' },
  { i: 'world', t: 'WMS/WMTS' },
  { i: 'vt', t: 'Vector Tiles' },
  { a: 'd', i: 'xyz', t: 'XYZ Tiles' },
  { i: 'xyz', t: 'Google Satellites', l: 1 },
  { i: 'xyz', t: 'Googlevsatellite', l: 1 },
  { i: 'xyzd', t: 'OpenStreetMap', l: 2 },
];

const Arrow = ({ a, c = 'text-[#5a5a5a]' }: { a?: string; c?: string }) => (
  <div className={`flex w-[26px] shrink-0 justify-center ${c}`}>
    {a === 'r' && <svg viewBox="0 0 6 10" className="h-[10px] w-[6px]"><path d="M.5 0L6 5 .5 10z" fill="currentColor" /></svg>}
    {a === 'd' && <svg viewBox="0 0 10 6" className="h-[5px] w-[10px]"><path d="M0 0h10L5 6z" fill="currentColor" /></svg>}
  </div>
);

const DockTitle = ({ t, h }: { t: string; h: string }) => (
  <div className={`flex items-center pr-px pl-[5px] ${h}`}>
    <span className="flex-1 pb-[2px] text-[16px] leading-none font-light">{t}</span>
    <svg viewBox="0 0 26 12" className="h-3 w-[26px]" fill="none" stroke="#5a5a5a">
      <rect x=".5" y=".5" width="10" height="11" rx="2" />
      <path d="M3 5h4v4H3zM5 5V3h3.500v4H7" />
      <rect x="14.500" y=".5" width="10" height="11" rx="2" />
      <path d="M17 3.500l5 5M22 3.500l-5 5" strokeWidth="2" />
    </svg>
  </div>
);

/* ---------- elevation raster ---------- */
const outline =
  'M870 40L898 42 905 70 920 73 940 65 950 75 965 70 972 95 985 88 1020 85 1035 70 1060 58 1080 65 1085 80 1105 88 1120 98 1108 120 1115 160 1118 208 1092 222 1110 235 1112 262 1160 268 1172 285 1170 322 1150 345 1148 365 1185 372 1190 400 1192 435 1180 460 1193 473 1170 487 1162 515 1128 523 1143 530 1140 615 1185 617 1215 597 1280 575 1345 540 1385 538 1398 580 1403 675 1385 678 1340 682 1310 725 1303 755 1285 772 1280 798 1268 805 1268 842 1285 850 1330 860 1328 885 1300 910 1292 955 1265 970 1238 965 1240 985 1247 993 1220 990 1190 1020 1185 1032 1175 1020 1150 1022 1145 1030 1120 1027 1100 1070 1090 1095 1075 1105 1045 1100 1042 1120 1035 1150 978 1155 950 1130 928 1110 932 1070 920 1010 905 1008 895 1035 870 1047 845 1045 825 1022 820 1000 797 998 790 1020 755 1042 720 1075 690 1095 665 1110 612 1123 598 1100 575 1070 545 1100 525 1112 508 1135 490 1130 478 1105 465 1080 460 1060 440 1045 440 1020 420 980 400 935 398 910 378 890 350 905 325 935 303 940 298 965 265 960 218 960 217 925 222 900 198 885 197 875 220 865 230 840 232 800 238 765 245 745 230 725 225 695 205 693 155 688 145 705 135 712 133 690 105 675 65 662 48 640 62 625 80 612 72 590 90 585 100 560 130 545 135 520 150 510 155 490 145 465 148 445 160 436 175 440 215 485 265 515 320 553 370 552 400 535 408 505 425 490 435 480 433 498 480 500 485 470 487 400 505 350 503 320 515 300 518 270 500 255 525 268 560 262 575 245 600 240 618 215 630 214 660 230 670 255 690 275 700 305 720 345 740 320 758 300 762 270 752 230 770 190 785 180 788 120 805 108 835 103 840 80 865 65Z';

/* x, y, rx, ry, brightness */
const hills: number[][] = [
  [728, 325, 42, 40, 1], [725, 350, 75, 36, .6], [655, 352, 50, 20, .45], [772, 250, 18, 70, .75], [790, 160, 18, 50, .7],
  [868, 65, 34, 34, .85], [845, 110, 30, 40, .4], [1060, 80, 50, 26, .65], [1040, 125, 30, 24, .25], [1108, 185, 12, 36, .7],
  [694, 285, 14, 36, .65], [655, 260, 30, 34, .2], [800, 330, 50, 26, .4], [760, 420, 30, 60, .35], [640, 430, 35, 24, .18], [722, 475, 30, 16, .3],
  [578, 490, 16, 28, .35], [672, 500, 18, 30, .38], [630, 552, 28, 20, .4], [660, 590, 20, 14, .2], [778, 658, 36, 16, .4],
  [1120, 575, 12, 42, .55], [1152, 632, 24, 12, .35], [625, 1112, 50, 22, .9], [710, 1065, 45, 22, .8], [755, 1030, 40, 16, .5], [590, 1068, 30, 24, .6],
  [640, 1020, 60, 50, .26], [840, 985, 36, 16, .45], [965, 1142, 30, 20, .75], [1000, 993, 46, 9, .55], [1080, 966, 55, 10, .5], [1060, 1070, 50, 30, .25],
  [685, 885, 50, 18, .2], [610, 900, 30, 14, .18], [172, 522, 14, 24, .24], [335, 685, 34, 20, .16], [275, 860, 30, 24, .15], [255, 940, 20, 18, .26], [300, 912, 20, 18, .14],
  [895, 465, 24, 18, .18], [930, 375, 20, 36, .14], [962, 295, 20, 18, .15], [1090, 410, 14, 22, .28], [1016, 525, 9, 32, .18], [1132, 275, 22, 20, .24],
  [1168, 490, 10, 22, .4], [560, 310, 34, 34, .1], [950, 800, 90, 60, .06], [1290, 620, 60, 40, .05], [460, 560, 24, 12, .1], [850, 535, 24, 20, .12], [540, 1030, 50, 50, .14],
];

/* main crest lines from which side spurs are grown; last value is brightness */
const crests: [number[][], number][] = [
  [[[725, 330], [760, 385], [762, 435], [722, 485]], .6], [[[725, 335], [655, 348], [612, 385]], .75], [[[735, 320], [800, 335], [860, 385], [900, 400]], .5],
  [[[730, 330], [775, 235], [792, 130]], .7], [[[700, 300], [660, 250], [620, 235]], .35], [[[640, 350], [650, 420], [600, 450]], .4],
  [[[762, 435], [830, 460], [850, 500]], .35], [[[600, 450], [580, 490], [590, 520]], .45], [[[690, 430], [668, 500], [640, 520]], .45], [[[600, 530], [630, 550], [680, 595]], .5],
  [[[740, 640], [775, 655], [830, 700]], .5], [[[850, 60], [840, 120], [890, 170]], .5], [[[870, 60], [900, 110], [930, 110]], .4], [[[1080, 85], [1045, 115], [1015, 160]], .55],
  [[[1105, 110], [1100, 190], [1060, 240]], .4], [[[750, 870], [685, 890], [600, 905]], .35], [[[685, 890], [660, 840]], .25], [[[685, 890], [720, 925]], .25],
  [[[620, 1110], [640, 1040], [600, 980], [560, 960]], .5], [[[570, 1070], [540, 1010], [500, 980]], .35], [[[690, 1080], [720, 1020], [680, 960]], .5], [[[750, 1040], [780, 990], [760, 960]], .35],
  [[[820, 990], [860, 965], [910, 950]], .45], [[[975, 1000], [1020, 990], [1085, 965], [1140, 955]], .55], [[[970, 1140], [960, 1080], [990, 1040], [1060, 1000]], .35], [[[1060, 1090], [1080, 1030], [1110, 990]], .3],
  [[[300, 640], [335, 685], [380, 690]], .24], [[[320, 800], [280, 855], [250, 880]], .24], [[[290, 910], [255, 940]], .3], [[[800, 870], [810, 920], [850, 900]], .22], [[[920, 820], [960, 800], [1000, 790]], .15],
  [[[910, 330], [940, 400]], .28], [[[890, 440], [895, 490]], .26], [[[960, 280], [980, 310]], .22], [[[1016, 500], [1010, 570]], .24], [[[1085, 390], [1095, 430]], .28], [[[840, 520], [860, 550]], .25], [[[960, 440], [980, 470]], .22],
  [[[1120, 540], [1115, 600]], .4], [[[560, 290], [600, 320], [620, 350]], .25], [[[165, 500], [180, 545]], .3], [[[440, 550], [470, 570]], .16], [[[560, 660], [585, 650]], .18], [[[880, 630], [910, 660]], .2], [[[720, 590], [700, 640]], .14],
];

const spurs = (() => {
  let seed = 11;
  const rnd = () => ((seed = (seed * 16807) % 2147483647) / 2147483647);
  const out: { d: string; o: number; w: number }[] = [];
  const grow = (x: number, y: number, ang: number, len: number, o: number, depth: number) => {
    let a = ang;
    const n = Math.max(2, Math.round(len / 10));
    for (let i = 0; i < n; i++) {
      a += (rnd() - .5) * .6;
      const nx = x + Math.cos(a) * 10;
      const ny = y + Math.sin(a) * 10;
      out.push({ d: `M${x.toFixed(0)} ${y.toFixed(0)}L${nx.toFixed(0)} ${ny.toFixed(0)}`, o: o * (1 - (i / n) * .75), w: (5 + depth * 2) * (1 - (i / n) * .45) });
      x = nx;
      y = ny;
      if (depth > 0 && rnd() < .4) grow(x, y, a + (rnd() < .5 ? 1 : -1) * (.5 + rnd() * .4), len * .45, o * .6 * (1 - i / n), depth - 1);
    }
  };
  crests.forEach(([p, o]) => {
    for (let i = 0; i < p.length - 1; i++) {
      const dx = p[i + 1][0] - p[i][0];
      const dy = p[i + 1][1] - p[i][1];
      const L = Math.hypot(dx, dy);
      const a = Math.atan2(dy, dx);
      out.push({ d: `M${p[i][0]} ${p[i][1]}L${p[i + 1][0]} ${p[i + 1][1]}`, o: o * .5, w: 9 });
      let side = 1;
      for (let s = 0; s < L; s += 12) {
        side = -side;
        grow(p[i][0] + (dx * s) / L, p[i][1] + (dy * s) / L, a + side * (.7 + rnd() * .6), 24 + 60 * o * rnd() + 10, o * .7, 2);
      }
    }
  });
  return out;
})();

const Dem = ({ id, className }: { id: string; className: string }) => (
  <svg viewBox="0 0 1440 1200" preserveAspectRatio="none" className={className}>
    <defs>
      <clipPath id={`${id}c`}><path d={outline} /></clipPath>
      <filter id={`${id}b`} x="-80%" y="-80%" width="260%" height="260%"><feGaussianBlur stdDeviation="14" /></filter>
      <filter id={`${id}s`} x="0" y="0" width="1440" height="1200" filterUnits="userSpaceOnUse"><feGaussianBlur stdDeviation="3" /></filter>
      <filter id={`${id}r`} x="0" y="0" width="1440" height="1200" filterUnits="userSpaceOnUse"><feGaussianBlur stdDeviation="10" /></filter>
      <filter id={`${id}n`} x="0" y="0" width="1440" height="1200" filterUnits="userSpaceOnUse" colorInterpolationFilters="sRGB">
        <feTurbulence type="fractalNoise" baseFrequency=".035" numOctaves="3" seed="4" />
        <feColorMatrix values="4 0 0 0 -1.500  4 0 0 0 -1.500  4 0 0 0 -1.500  0 0 0 0 1" result="n" />
        <feComposite in="SourceGraphic" in2="n" operator="arithmetic" k1=".6" k2=".45" />
      </filter>
      <filter id={`${id}j`} x="0" y="0" width="1440" height="1200" filterUnits="userSpaceOnUse" colorInterpolationFilters="sRGB">
        <feTurbulence type="fractalNoise" baseFrequency=".09" numOctaves="2" seed="8" result="t" />
        <feDisplacementMap in="SourceGraphic" in2="t" scale="16" xChannelSelector="R" yChannelSelector="G" />
      </filter>
    </defs>
    <g filter={`url(#${id}j)`}>
      <g clipPath={`url(#${id}c)`}>
        <rect width="1440" height="1200" fill="#0c0c0c" />
        <g filter={`url(#${id}n)`}>
          <rect width="1440" height="1200" fill="#101010" />
          {hills.map(([x, y, rx, ry, o], i) => (
            <ellipse key={i} cx={x} cy={y} rx={rx} ry={ry} fill="#fff" opacity={o} filter={`url(#${id}b)`} />
          ))}
        </g>
        <g filter={`url(#${id}s)`} fill="none" stroke="#fff" strokeLinecap="round" strokeLinejoin="round">
          {spurs.map((s, i) => <path key={i} d={s.d} strokeOpacity={s.o * .4} strokeWidth={s.w} />)}
        </g>
        <ellipse cx="728" cy="318" rx="34" ry="34" fill="#fff" filter={`url(#${id}b)`} />
        <path d="M190 470L330 580 400 625 480 680 600 735 680 790 760 812 820 780 870 705 930 700 1010 745 1090 770 1140 730 1190 640 1230 600 1390 545" fill="none" stroke="#000" strokeWidth="34" strokeLinejoin="round" filter={`url(#${id}r)`} />
      </g>
    </g>
  </svg>
);

const Win3d = () => (
  <div className="absolute top-[180px] left-[1370px] flex h-[437px] w-[400px] flex-col bg-[#f0f0f0] shadow-[0_1px_7px_1px_rgba(0,0,0,0.45)]">
    <div className="flex h-[37px] items-center justify-between bg-white pr-px pl-[9px]">
      <span className="pb-[2px] text-[15.500px] font-light tracking-[0.15px] [word-spacing:1px] text-[#8c8c8c]">1 3D 지도</span>
      <div className="mt-[3px] flex size-[25px] items-center justify-center bg-[#e4e4e4]">
        <svg viewBox="0 0 8 8" className="size-2"><path d="M1 1l6 6M7 1L1 7" stroke="#fff" strokeWidth="1.500" /></svg>
      </div>
    </div>
    <div className="flex h-[31px] items-center pb-px pl-[3px]">
      {['hand*', 'zfull', 'compass*', '/', 'ident', 'measure', 'play', 'saveimg', 'cube', '/', 'eye', 'wrench'].map((n, i) =>
        n === '/' ? (
          <div key={i} className="flex w-[8px] justify-center"><div className="h-3 w-px bg-[#c4c4c4]" /></div>
        ) : (
          <div key={i} className="flex w-[25px] justify-center">
            <div className={`flex h-[23px] w-6 items-center justify-center ${n.endsWith('*') ? 'rounded-[2px] border border-[#a3a3a3] bg-[#dcdcdc]' : ''}`}>
              <Ic n={n.replace('*', '')} className="size-[16px]" />
            </div>
          </div>
        ),
      )}
    </div>
    <div className="flex min-h-0 flex-1">
      <div className="relative w-[217px] overflow-hidden bg-white">
        <Dem id="m3" className="absolute top-[73px] left-[-25px] h-[223px] w-[266px]" />
      </div>
      <div className="flex-1 pt-[13px] pl-[22px]">
        <div className="grid w-[146px] grid-cols-[20px_1fr_20px] items-center justify-items-center gap-y-[11px]">
          <Ic n="rotl" className="size-[15px]" />
          <Ic n="triu" className="size-[18px]" />
          <Ic n="zin" className="size-5" />
          <Ic n="tril" className="size-[17px]" />
          <svg viewBox="0 0 84 84" className="size-[84px]">
            <circle cx="42" cy="42" r="42" fill="#fff" />
            <path d="M42 16l5 26H37z" fill="#e80000" />
            <path d="M42 69l-3.500-27H42z" fill="#dedede" />
            <g fontFamily='"Liberation Sans"' fontSize="14" fill="#000" textAnchor="middle">
              <text x="41.500" y="15">N</text>
              <text x="42" y="81">S</text>
              <text x="9" y="48">W</text>
              <text x="73" y="48">E</text>
            </g>
          </svg>
          <Ic n="trir" className="size-[17px]" />
          <Ic n="rotr" className="size-[15px]" />
          <Ic n="trid" className="size-[18px]" />
          <Ic n="zout" className="size-5" />
        </div>
      </div>
    </div>
  </div>
);

const Spin = () => (
  <div className="flex h-full w-[17px] flex-col items-center justify-center gap-[3px] border-l border-[#b5b5b5] bg-[#f7f7f7]">
    <div className="h-0 w-0 border-x-[4px] border-b-[5px] border-x-transparent border-b-[#555]" />
    <div className="h-0 w-0 border-x-[4px] border-t-[5px] border-x-transparent border-t-[#555]" />
  </div>
);

const Check = () => (
  <div className="flex size-[17px] shrink-0 items-center justify-center border border-[#b0b0b0] bg-white">
    <svg viewBox="0 0 12 13" className="h-[13px] w-3"><path d="M2 6l3 5 5-9.500" fill="none" stroke="#111" strokeWidth="2.200" /></svg>
  </div>
);

const RasterIcon = ({ sel }: { sel?: boolean }) => {
  const c = sel ? ['#1f4f86', '#6aa8e0', '#2f7fcb'] : ['#2c3e50', '#a9c4e4', '#dfe9f5'];
  const m = [2, 0, 1, 0, 0, 1, 0, 1, 1, 0, 1, 2, 0, 1, 0, 2];
  const p = [1, 0, 1, 0, 0, 1, 0, 1, 1, 0, 1, 1, 0, 1, 1, 2];
  return (
    <svg viewBox="0 0 16 16" className="size-4 shrink-0" shapeRendering="crispEdges">
      {(sel ? m : p).map((k, i) => <rect key={i} x={(i % 4) * 4} y={Math.floor(i / 4) * 4} width="4" height="4" fill={c[k]} />)}
    </svg>
  );
};

const Castle = () => (
  <svg viewBox="0 0 98 48" className="h-[48px] w-[98px]">
    <path d="M8 15c-4-2-1-8 4-7 2-6 10-5 11 1 6 0 7 6 3 7z" fill="#b7d3e0" />
    <path d="M80 3l2 4 4 1-4 2-1 4-3-4-4-1 4-2z" fill="#e37bf0" />
    <circle cx="95" cy="19" r="2.500" fill="#ffb300" />
    <circle cx="7" cy="27" r="2.500" fill="#6fd3e8" />
    <g fill="#5b8c34"><ellipse cx="29" cy="28" rx="4" ry="9" /><ellipse cx="86" cy="24" rx="4" ry="10" /><ellipse cx="74" cy="17" rx="4" ry="6" /><ellipse cx="42" cy="20" rx="3" ry="6" /></g>
    <g fill="#f0c87a">
      <path d="M51 6h11v15H51zM44 17h28v14H44zM31 24h20v14H31zM68 20h14v18H68zM12 33h26v15H12zM38 30h44v18H38zM80 32h12v16H80z" />
    </g>
    <g fill="#d9a257"><path d="M57 6h5v15h-5zM76 20h6v12h-6zM32 35h6v13h-6zM60 38h6v10h-6z" /></g>
    <g fill="#cf7431">
      <path d="M49 6l8-4 7 4zM41 19l8-6h8l4 6zM60 19l6-5h8l4 6zM28 26l5-6h14l4 6zM50 28l4-5h16l4 5zM66 24l5-7h9l4 7zM10 35l6-6h16l5 6zM38 34l4-6h14l4 6zM60 36l4-6h16l4 6zM25 42l4-5h14l4 5zM48 43l4-5h14l4 5z" />
    </g>
    <g fill="#6d4630"><path d="M54 9h2v4h-2zM58 9h2v4h-2zM35 28h2v3h-2zM40 28h2v3h-2zM45 28h2v3h-2zM55 31h2v3h-2zM61 31h2v3h-2zM71 27h2v3h-2zM76 27h2v3h-2zM15 38h2v4h-2zM20 38h2v4h-2zM30 44h2v4h-2zM36 44h2v4h-2zM54 45h2v3h-2zM60 45h2v3h-2zM70 38h2v4h-2zM76 38h2v4h-2zM85 36h2v4h-2z" /></g>
    <g fill="#4f7f2a"><ellipse cx="4" cy="46" rx="9" ry="6" /><ellipse cx="92" cy="42" rx="6" ry="9" /><ellipse cx="77" cy="46" rx="5" ry="5" /></g>
  </svg>
);

const QLogo = ({ className }: { className: string }) => (
  <svg viewBox="0 0 32 32" className={className}>
    <path d="M16 1a14 14.500 0 1 0 5 28l-4-5.500A8.500 9 0 1 1 24.500 16l4 5A14.500 14.500 0 0 0 16 1z" fill="#6aa329" />
    <path d="M16 1a14 14.500 0 0 0-11 6l5 4a9 9 0 0 1 14.500 5l4 5A14.500 14.500 0 0 0 16 1z" fill="#93b023" />
    <path d="M14 13l6 1 3 4-4 4-4-3z" fill="#ee7913" />
    <path d="M19 22l4-4 8 9-1 4h-5z" fill="#6aa329" />
  </svg>
);

const TaskCell = ({ w, children, bg = '', line = '' }: { w: string; children: React.ReactNode; bg?: string; line?: string }) => (
  <div className={`flex h-full shrink-0 flex-col ${w} ${bg}`}>
    <div className="flex flex-1 items-center justify-center pt-px">{children}</div>
    <div className={`mx-auto h-[3px] ${line}`} />
  </div>
);

const K = "font-['Noto_Sans_CJK_KR',sans-serif]";

export default function App() {
  return (
    <div className={`relative flex h-[1080px] w-[1920px] flex-col overflow-hidden bg-[#f0f0f0] text-black ${K}`}>
      {/* title bar */}
      <div className="relative flex h-[29px] shrink-0 items-center bg-white pl-[2px]">
        <div className="absolute top-0 left-[809px] flex"><div className="h-px w-[60px] bg-[#0078d7]" /><div className="h-px w-[241px] bg-[#dcdcdc]" /></div>
        <QLogo className="size-[20px]" />
        <span className="ml-[5px] flex-1 pb-[2px] text-[16px] leading-none font-light tracking-[0.1px] [word-spacing:1.3px]">*제목 없는 프로젝트 — QGIS</span>
        <svg viewBox="0 0 160 29" className="h-[29px] w-[160px]" fill="none" stroke="#111" strokeWidth="1.100">
          <path d="M5 14.500h12M64 11.500h8v8h-8zM66 11.500v-2h8v8h-2M122.500 9l11 11M133.500 9l-11 11" />
        </svg>
      </div>
      {/* menu bar */}
      <div className="flex h-[25px] shrink-0 items-center border-b border-[#d0d0d0] pb-[2px] pl-[11px] text-[16px] leading-none font-light whitespace-nowrap">
        {menus.map(([t, k, w]) => (
          <div key={k} className={`shrink-0 ${w}`}>{t}<span className="ml-[6px] font-['Noto_Sans',sans-serif] text-[15.500px] font-normal tracking-[-0.5px]">(<span className="underline underline-offset-2">{k}</span>)</span></div>
        ))}
      </div>
      <div className="shrink-0">
        <Bar items="new open save layout manager style | hand* pan zin zout zfull zsel- zlay z11 zlast znext- newmap mesh bmnew bm clock refresh | ident table- abacus- gear sigma measure v tips* run- v- textann v" />
        <Bar items="layers gpkg vnew quillnew chip / virt / || pencils- pencil- savee- addblob- vertex- v- multi- trash- cut- copy- paste- undo- redo- | label- diag- / labelpin labelred / lpin- leye- lmove- lrot- ledit- | webadd webfind websearch | python | help |" />
        <Bar items="arcdash- ruler bmove- v- brot- bsimp- bring- bpart- bfill- bringx- bpartx- breshape- boff- vrev- trim- split- split- merge- mergea- rotpt- v-" />
        <Bar h="h-[38px]" items="arc- v- circ- v- ell- v- rectn- v- poly- v- | selrect- v- selform- v- desel v selloc" />
      </div>

      {/* work area */}
      <div className="flex min-h-0 flex-1">
        <div className="flex w-[294px] shrink-0 flex-col">
          <DockTitle t="탐색기" h="h-[23px]" />
          <div className="flex h-[28px] items-center pb-1 pl-[3px]">
            {['addlay', 'refresh', 'funnel', 'tup', 'info'].map((n) => <div key={n} className="flex w-[25px] justify-center"><Ic n={n} className="size-[15px]" /></div>)}
          </div>
          <div className="flex h-[377px] shrink-0 border border-[#b4b4b4] bg-white">
            <div className="flex-1">
              {tree.map((r) => (
                <div key={r.t} className={`flex h-[22px] items-center ${r.l === 2 ? 'mr-[40px] bg-[#efefef]' : ''}`}>
                  <Arrow a={r.a} />
                  <div className={`flex w-5 shrink-0 justify-center ${r.l ? 'ml-[27px]' : 'ml-[2px]'}`}><Ic n={r.i} className="size-[19px]" /></div>
                  <span className={`ml-[6px] leading-none whitespace-nowrap ${r.k ? 'pb-[2px] text-[16px] font-light [word-spacing:2px]' : "font-['Noto_Sans','Noto_Sans_CJK_KR',sans-serif] text-[15px] tracking-[-0.2px]"}`}>{r.t}</span>
                </div>
              ))}
            </div>
            <div className="flex w-[17px] flex-col border-l border-[#b9b9b9]">
              <div className="flex h-[17px] items-center justify-center border-b border-[#b9b9b9] bg-[#fafafa]"><div className="h-0 w-0 border-x-[5px] border-b-[5px] border-x-transparent border-b-[#444]" /></div>
              <div className="flex-1 border-b border-[#b9b9b9] bg-gradient-to-r from-white to-[#f3f3f3]" />
              <div className="h-[88px] bg-[#e6e6e6]" />
              <div className="flex h-[17px] items-center justify-center border-t border-[#b9b9b9] bg-[#fafafa]"><div className="h-0 w-0 border-x-[5px] border-t-[5px] border-x-transparent border-t-[#444]" /></div>
            </div>
          </div>
          <div className="flex h-[4px] shrink-0 items-center justify-center gap-[2px]">{[0, 1, 2, 3, 4, 5].map((i) => <i key={i} className="size-px bg-[#999]" />)}</div>
          <DockTitle t="레이어" h="h-[25px]" />
          <div className="flex h-[28px] items-center pb-1 pl-[3px]">
            {['brush', 'group', 'eye', 'funnel', 'expr', 'v', 'tdown', 'tup', 'remlay'].map((n) =>
              n === 'v' ? <div key={n} className="-mr-[3px] ml-[-1px] flex w-[19px] justify-center pr-[1px]"><div className="h-0 w-0 border-x-[5px] border-t-[5px] border-x-transparent border-t-[#9a9a9a]" /></div>
                : <div key={n} className="flex w-[25px] justify-center"><Ic n={n} className="size-[15px]" /></div>)}
          </div>
          <div className="flex-1 border border-[#b4b4b4] bg-white text-[16px] leading-none">
            <div className="flex h-[22px] items-center bg-gradient-to-b from-[#1a84dc] to-[#0476d6] text-white">
              <Arrow a="d" c="text-[#0a3a6b]" />
              <div className="ml-[2px] size-[17px] border border-[#dce9f6] bg-white" />
              <div className="ml-[8px]"><RasterIcon sel /></div>
              <span className="ml-[8px] flex-1 text-[16px] font-light tracking-[0.3px] italic underline underline-offset-[3px]">음영기복도</span>
              <div className="mr-[8px] flex size-[18px] items-center justify-center rounded-[2px] bg-[#f4f6f8]">
                <svg viewBox="0 0 14 12" className="h-3 w-[14px]"><path d="M3 0v12M5.500 0v12M8.500 0v12M11 0v12" stroke="#7b8b9c" strokeWidth="1.100" /><rect x="1" y="2.500" width="12" height="7" rx="1" fill="#fff" stroke="#7b8b9c" strokeWidth="1.200" /></svg>
              </div>
            </div>
            {([['36', '254', ''], ['1', '580', 'Seoul_Dem']] as const).map(([lo, hi, name]) => (
              <div key={lo} className="font-['Noto_Sans',sans-serif] text-[15px]">
                {name && (
                  <div className="flex h-[22px] items-center"><Arrow a="d" /><div className="ml-[2px]"><Check /></div><div className="ml-[8px]"><RasterIcon /></div><span className="ml-[8px] text-[14.500px] font-bold tracking-[-0.3px]">{name}</span></div>
                )}
                <div className="flex h-[22px] items-center pl-[53px]"><div className="size-4 bg-black" /><span className="ml-[6px] tracking-[-0.6px]">{lo}</span></div>
                <div className="flex h-[22px] items-center pl-[75px] tracking-[-0.6px]">{hi}</div>
              </div>
            ))}
          </div>
        </div>
        <div className="flex w-[7px] shrink-0 flex-col items-center gap-[2px] pt-[387px]">{[0, 1, 2, 3, 4, 5].map((i) => <i key={i} className="size-px shrink-0 bg-[#999]" />)}</div>
        <div className="relative mt-px flex-1 border border-[#b4b4b4] bg-white">
          <Dem id="m2" className="absolute top-[229px] left-[528px] h-[400px] w-[480px]" />
        </div>
      </div>

      {/* status bar */}
      <div className="flex h-[32px] shrink-0 items-center pl-1 text-[13.500px] leading-none font-light whitespace-nowrap">
        <div className="flex h-[22px] w-[437px] items-center rounded-[2px] border border-[#adadad] bg-white pl-[7px] text-[#777]">
          <svg viewBox="0 0 13 13" className="size-[13px]" fill="none" stroke="#888" strokeWidth="1.500"><circle cx="5.500" cy="5" r="4" /><path d="M8.500 8l4 4" /></svg>
          <span className="ml-[8px] text-[14px] tracking-[0.6px] [word-spacing:2.500px]">위치를 찾으려면 입력하세요 <span className="tracking-[-0.3px]">(Ctrl+K)</span></span>
        </div>
        <div className="ml-[636px] flex w-[29px]">좌표</div>
        <div className="flex h-[22px] w-[103px] items-center rounded-[2px] border border-[#adadad] bg-white pl-[7px] font-['Liberation_Sans',sans-serif] text-[13px] font-normal tracking-[-0.100px]">188671,428135</div>
        <svg viewBox="0 0 20 20" className="ml-[5px] size-5"><ellipse cx="7" cy="6" rx="5" ry="6" fill="#222" transform="rotate(-20 7 6)" /><path d="M5 2l4 9M9 2l3 8" stroke="#fff" /><circle cx="12" cy="14" r="5" fill="#fff" stroke="#111" strokeWidth="2" /><circle cx="12" cy="14" r="1.500" /><path d="M15 4l4-3M0 14l4-3M16 8l3-2" stroke="#111" strokeDasharray="2 1" /></svg>
        <div className="ml-[13px] w-[29px]">축척</div>
        <div className="flex h-[22px] w-[101px] items-center rounded-[2px] border border-[#adadad] bg-white pl-1 font-['Liberation_Sans',sans-serif] text-[13px] font-normal"><span className="flex-1">1:383382</span><div className="flex h-full w-[24px] items-center justify-center bg-[#f5f5f5]"><div className="h-0 w-0 border-x-[5px] border-t-[5px] border-x-transparent border-t-[#555]" /></div></div>
        <svg viewBox="0 0 16 20" className="ml-[13px] h-[20px] w-[16px]"><path d="M3.500 10V6a4.500 4.500 0 0 1 9 0v4" fill="none" stroke="#8c8c84" strokeWidth="2" /><rect x="0" y="8" width="16" height="11.500" rx="1" fill="#666" /></svg>
        <div className="ml-[9px] w-[42px]">확대경</div>
        <div className="flex h-[22px] w-[99px] items-center rounded-[2px] border border-[#adadad] bg-white pl-[5px] font-['Liberation_Sans',sans-serif] text-[13px] font-normal tracking-[-0.3px]"><span className="flex-1">100%</span><Spin /></div>
        <div className="ml-[10px] w-[35px]">회전</div>
        <div className="flex h-[22px] w-[94px] items-center rounded-[2px] border border-[#adadad] bg-white pl-[4px] font-['Liberation_Sans',sans-serif] text-[13px] font-normal"><span className="flex-1">0.0 °</span><Spin /></div>
        <div className="ml-[7px]"><Check /></div>
        <div className="ml-[6px] w-[55px]">렌더링</div>
        <svg viewBox="0 0 20 18" className="h-[18px] w-5" fill="none" stroke="#666" strokeWidth="1.200"><path d="M1 9l4-6 5-2 5 2 4 6-5 6-4 2-4-2z" fill="#ccc" /><path d="M1 9h18M4 5h12M4 13h12M10 1v16M7 2c-3 5-3 9 0 14M13 2c3 5 3 9 0 14" /></svg>
        <span className="ml-[4px] w-[68px] font-['Liberation_Sans',sans-serif] text-[13px] font-normal tracking-[-0.200px]">EPSG:5174</span>
        <svg viewBox="0 0 20 20" className="ml-[20px] size-5"><ellipse cx="10" cy="8.500" rx="10" ry="8" fill="#666" /><path d="M13 14l5 6v-8z" fill="#666" /><g fill="#fff"><circle cx="5.500" cy="8" r="1.300" /><circle cx="10" cy="8" r="1.300" /><circle cx="14.500" cy="8" r="1.300" /></g></svg>
      </div>

      {/* taskbar */}
      <div className="flex h-[50px] shrink-0 items-center bg-[linear-gradient(90deg,#191f2d_0px,#1a1c28_560px,#2a201b_640px,#30221a_850px,#2a1f2c_930px,#231a38_1000px,#221a3a_1240px,#1e1c26_1330px,#1f1c2a_1440px,#221a3a_1500px,#211b35_1600px,#1c1b22_1720px,#1b1c22_1920px)] text-white">
        <div className="flex w-[60px] justify-center"><svg viewBox="0 0 20 20" className="size-5 text-white" fill="currentColor"><path d="M0 3l8.500-1.200v7.700H0zM9.500 1.600L20 0v9.500H9.500zM0 10.500h8.500v7.700L0 17zM9.500 10.500H20V20L9.500 18.400z" /></svg></div>
        <div className="flex h-full w-[430px] items-center border-t border-[#cfcfcf] bg-[#f2f2f2] pl-[15px] text-[#333]">
          <svg viewBox="0 0 20 20" className="size-5" fill="none" stroke="#222" strokeWidth="1.600"><circle cx="12.500" cy="7.500" r="6" /><path d="M8.500 12L.8 19.500" /></svg>
          <span className="ml-[15px] w-[279px] pb-1 text-[20px] leading-none font-light tracking-[0.65px] [word-spacing:2px] whitespace-nowrap">검색하려면 여기에 입력하십시</span>
          <Castle />
        </div>
        <TaskCell w="w-[59px]"><svg viewBox="0 0 20 20" className="size-5"><circle cx="10" cy="10" r="8" fill="none" stroke="#fff" strokeWidth="2.600" /></svg></TaskCell>
        <TaskCell w="w-[61px]"><svg viewBox="0 0 22 20" className="h-5 w-[22px]" fill="none" stroke="#fff" strokeWidth="1.400"><path d="M1.500 0v2.500h12V0M1.500 20v-2.500h12V20M1.500 5.500h12v9h-12zM19.500 0v5M19.500 10v10" /><rect x="18" y="6" width="3" height="3" fill="#fff" /></svg></TaskCell>
        <TaskCell w="w-[67px]" line="w-[51px] bg-[#76b9ed]"><svg viewBox="0 0 28 24" className="h-6 w-7"><path d="M0 2c0-2 1-2 2-2h9l3 3H0z" fill="#e0a10c" /><path d="M0 3h28v18c0 1-1 1-1 1H1s-1 0-1-1z" fill="#ffd25e" /><path d="M5 24V14c0-2 1-2 2-2h14c1 0 2 0 2 2v10h-5v-4h-8v4z" fill="#3c97e0" /></svg></TaskCell>
        <TaskCell w="w-[61px]"><svg viewBox="0 0 24 28" className="h-7 w-6"><path d="M2 9C6 0 18 0 22 9 17 5 7 5 2 9zM2 19c4 9 16 9 20 0-5 4-15 4-20 0z" fill="#f37726" /><circle cx="19" cy="2" r="1.500" fill="#999" /><circle cx="4" cy="26" r="2" fill="#999" /><circle cx="3" cy="4" r="1" fill="#777" /></svg></TaskCell>
        <TaskCell w="w-[61px]" bg="bg-[#b06428]" line="w-full bg-[#ff7a00]"><svg viewBox="0 0 30 30" className="size-[30px]"><rect width="30" height="30" rx="2" fill="#fae100" /><path d="M15 4.500c7 0 12 4 12 9.200S22 23 15 23l-5 4 .7-4.600C6 21 3 17.500 3 13.700 3 8.500 8 4.500 15 4.500z" fill="#3a1d1d" /><text x="6" y="16.800" fontSize="8" fontWeight="700" fill="#fae100" fontFamily='"Open Sans"' textLength="18" lengthAdjust="spacingAndGlyphs">TALK</text></svg></TaskCell>
        <TaskCell w="w-[62px]"><svg viewBox="0 0 30 30" className="size-[30px]"><circle cx="15" cy="15" r="14" fill="#fff" stroke="#3aa3b8" strokeWidth="1.500" /><path d="M12 26c-1-4 1-8 0-11-2 1-5 1-6-1-1-3 3-4 4-7 2-3 7-3 9-1 4 1 6 6 5 11-1 2-2 1-3-1 0 4-2 6-1 10z" fill="#fff" stroke="#222" strokeWidth="1" /><path d="M18 7c4 0 6 5 4.500 10.500C20 17 18 12 18 7z" fill="#1c1c1c" /><path d="M4.500 16c2 1 4 1 5.500 0 .5 4-1 7 0 10-3-1-6-5-5.500-10zM16 16c2 2 3 7 2 11l5-3c1-2 1-3 1-5-3 1-5-1-8-3z" fill="#1c1c1c" /><circle cx="13" cy="9.500" r="1.100" /><ellipse cx="6.800" cy="13" rx="1.600" ry="1.200" /></svg></TaskCell>
        <TaskCell w="w-[62px]" line="w-[51px] bg-[#76b9ed]"><svg viewBox="0 0 28 28" className="size-7"><circle cx="14" cy="14" r="14" fill="#fff" /><path d="M14 14L1.900 7A14 14 0 0 1 26.100 7z" fill="#db4437" /><path d="M14 7h12.100A14 14 0 0 1 14 28l6-10.500z" fill="#ffcd40" /><path d="M1.900 7A14 14 0 0 0 14 28l6-10.500-6 3.500L8 17.500z" fill="#0f9d58" /><circle cx="14" cy="14" r="6.800" fill="#fff" /><circle cx="14" cy="14" r="5.300" fill="#4285f4" /></svg></TaskCell>
        <TaskCell w="ml-px w-[57px]" bg="bg-[#564c66]" line="w-full bg-[#76b9ed]"><QLogo className="size-[29px]" /></TaskCell>
        <div className="flex h-full w-[4px] flex-col border-l border-[#2d2440] bg-[#433a55]"><div className="flex-1" /><div className="h-[3px] bg-[#5d9cd0]" /></div>
        <TaskCell w="w-[63px]" line="w-[51px] bg-[#76b9ed]">
          <svg viewBox="0 0 30 30" className="size-[30px]">
            <defs><linearGradient id="eg" x1="0" y1="0" x2="1" y2="0"><stop offset="0" stopColor="#2fb4e8" /><stop offset="1" stopColor="#5fdc64" /></linearGradient><linearGradient id="eb" x1="0" y1="0" x2="0" y2="1"><stop offset="0" stopColor="#2090dc" /><stop offset="1" stopColor="#0c4a97" /></linearGradient></defs>
            <path d="M1 14C1 5 7 0 15 0c9 0 15 6 15 12 0 5-4 8-8 8-3 0-4-1-4-2s2-2 1-5c-1-4-8-7-18 1z" fill="url(#eg)" />
            <path d="M0 15c1-6 5-8 9-8 6 0 10 4 9.500 7-4-3-8 2-6 6.500S21 27 27 23.500C24 28 20 30 15 30 6 30 0 23 0 15z" fill="url(#eb)" />
          </svg>
        </TaskCell>
        <div className="flex-1" />
        <div className="flex h-full w-[608px] items-center pt-px leading-none whitespace-nowrap">
          <svg viewBox="0 0 30 28" className="h-7 w-[30px]"><circle cx="20" cy="8" r="7.500" fill="#fba919" /><path d="M6 20c-7 0-7-9 0-9 1-8 13-8 14-1 8 0 8 10 1 10z" fill="#d8e5fa" /><circle cx="24" cy="23" r="4.300" fill="#e81123" /></svg>
          <span className="ml-[8px] w-[49px] font-['Open_Sans',sans-serif] text-[18px] tracking-[-0.6px]">31°C</span>
          <span className="w-[115px] text-[18.500px] font-light tracking-[0.7px] [word-spacing:2px]">대체로 흐림</span>
          <svg viewBox="0 0 18 10" className="h-[10px] w-[18px]" fill="none" stroke="#fff" strokeWidth="1.500"><path d="M1 9l8-8 8 8" /></svg>
          <svg viewBox="0 0 18 18" className="ml-[12px] size-[18px]"><circle cx="9" cy="9" r="7.800" fill="none" stroke="#fff" strokeWidth="1.700" /><circle cx="9" cy="9" r="3.800" fill="#fff" /></svg>
          <svg viewBox="0 0 16 18" className="ml-[15px] h-[18px] w-4" fill="none" stroke="#fff" strokeWidth="1.200"><path d="M1.500 5h8.500v8H1.500zM10 8l4-2v6l-4-2M2 2c2-1.500 6-1.500 9 0M2 16c2 1.500 6 1.500 9 0" /></svg>
          <svg viewBox="0 0 22 14" className="ml-[10px] h-[14px] w-[22px]"><path d="M6 4h13v9H6z" fill="#fff" stroke="#fff" /><path d="M20 6.500h2v4h-2z" fill="#fff" /><path d="M1 1v3M4 1v3M0 4h5v2L3.500 7v3H6" stroke="#fff" fill="none" /></svg>
          <svg viewBox="0 0 18 18" className="ml-[11px] size-[18px]" fill="none" stroke="#ddd" strokeWidth="1.300"><path d="M2 17C2 8 8 2 17 2M6 17c0-6 5-11 11-11M10 17c0-4 3-7 7-7M13.500 17c0-2 2-3.500 3.500-3.500" /></svg>
          <svg viewBox="0 0 22 16" className="ml-[9px] h-4 w-[22px]" fill="none" stroke="#fff" strokeWidth="1.200"><path d="M1 5h3l4-4v14l-4-4H1zM11 6c1 1 1 3 0 4" /><path d="M14 4c2 2 2 6 0 8M17 1.500c3.500 4 3.500 9 0 13" stroke="#888" /></svg>
          <span className="ml-[8px] w-[18px] font-['Open_Sans',sans-serif] text-[24px] tracking-tighter">A</span>
          <div className="ml-[17px] flex size-[18px] items-center justify-center bg-white pb-px text-[15px] text-black">한</div>
          <div className="ml-[21px] flex w-[80px] flex-col items-center gap-[8px] pb-px text-[15px]">
            <span className="text-[15px] font-light tracking-[0.1px]">오후 3:35</span>
            <span className="font-['Open_Sans',sans-serif] text-[14.500px] tracking-[-0.3px]">2022-07-15</span>
          </div>
          <svg viewBox="0 0 20 20" className="ml-[19px] size-5" fill="none" stroke="#fff" strokeWidth="1.300"><path d="M.8 1h18.400v14h-6l-3 3.500-3-3.500H.8z" /></svg>
          <div className="mt-[-1px] ml-[25px] h-[50px] w-px bg-[#777]" />
        </div>
      </div>
      <Win3d />
    </div>
  );
}
